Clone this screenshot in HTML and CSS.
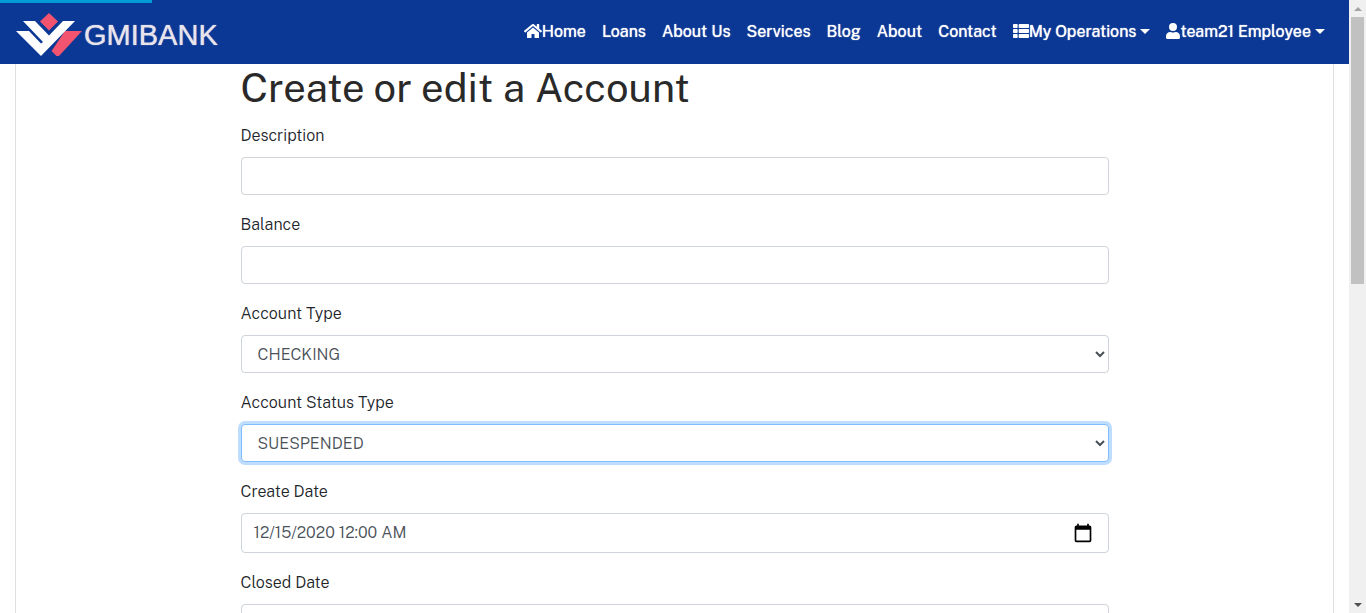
FILE: index.html
```html
<!DOCTYPE html>
<html lang="en">
<head>
<meta charset="utf-8">
<title>Create or edit a Account</title>
<link rel="stylesheet" href="styles.css">
</head>
<body>
<div class="page">
  <header class="navbar">
    <div class="progress"></div>
    <a class="brand" href="#">
      <svg class="brand-mark" viewBox="0 0 66 44" aria-hidden="true">
        <path fill="#f2546f" d="M33 0l9 8.500-9 9-9-9zM49 18h17L43 43h-2.500l-5-5z"/>
        <path fill="#fff" d="M7 8h12l14 14.500L47 8h12L25 43 0 18h13l12 12.500 2-1.500z"/>
      </svg>
      <span class="brand-name">GMIBANK</span>
    </a>
    <nav class="menu">
      <a class="menu-link" href="#"><svg class="icon icon-wide" viewBox="0 0 576 512" aria-hidden="true"><path d="M280.400 148.300L96 300.100V464a16 16 0 0 0 16 16l112-.300a16 16 0 0 0 16-16V368a16 16 0 0 1 16-16h64a16 16 0 0 1 16 16v95.600a16 16 0 0 0 16 16.100l112 .300a16 16 0 0 0 16-16V300L295.700 148.300a12.200 12.200 0 0 0-15.300 0zM571.600 251.500L488 182.600V44a12 12 0 0 0-12-12h-56a12 12 0 0 0-12 12v72.600L318.500 43a48 48 0 0 0-61 0L4.300 251.500a12 12 0 0 0-1.600 16.900l25.500 31a12 12 0 0 0 16.900 1.600L280.400 107.200a12.200 12.200 0 0 1 15.300 0L531 301a12 12 0 0 0 16.900-1.600l25.500-31a12 12 0 0 0-1.800-16.900z"/></svg>Home</a>
      <a class="menu-link" href="#">Loans</a>
      <a class="menu-link" href="#">About Us</a>
      <a class="menu-link" href="#">Services</a>
      <a class="menu-link" href="#">Blog</a>
      <a class="menu-link" href="#">About</a>
      <a class="menu-link" href="#">Contact</a>
      <button class="menu-link" type="button"><svg class="icon" viewBox="0 0 512 512" aria-hidden="true"><path d="M24 32h101a24 24 0 0 1 24 24v80a24 24 0 0 1-24 24H24a24 24 0 0 1-24-24V56a24 24 0 0 1 24-24zM24 192h101a24 24 0 0 1 24 24v80a24 24 0 0 1-24 24H24a24 24 0 0 1-24-24v-80a24 24 0 0 1 24-24zM24 352h101a24 24 0 0 1 24 24v80a24 24 0 0 1-24 24H24a24 24 0 0 1-24-24v-80a24 24 0 0 1 24-24zM205 32h283a24 24 0 0 1 24 24v80a24 24 0 0 1-24 24H205a24 24 0 0 1-24-24V56a24 24 0 0 1 24-24zM205 192h283a24 24 0 0 1 24 24v80a24 24 0 0 1-24 24H205a24 24 0 0 1-24-24v-80a24 24 0 0 1 24-24zM205 352h283a24 24 0 0 1 24 24v80a24 24 0 0 1-24 24H205a24 24 0 0 1-24-24v-80a24 24 0 0 1 24-24z"/></svg>My Operations<span class="caret"></span></button>
      <button class="menu-link" type="button"><svg class="icon icon-narrow" viewBox="0 0 448 512" aria-hidden="true"><path d="M224 256a128 128 0 1 0 0-256 128 128 0 0 0 0 256zm89.600 32h-16.700a174 174 0 0 1-145.800 0h-16.700A134.400 134.400 0 0 0 0 422.400V464a48 48 0 0 0 48 48h352a48 48 0 0 0 48-48v-41.600A134.400 134.400 0 0 0 313.600 288z"/></svg>team21 Employee<span class="caret"></span></button>
    </nav>
  </header>
  <main class="card">
    <form class="form">
      <h1 class="title">Create or edit a Account</h1>
      <div class="group">
        <label class="label" for="description">Description</label>
        <input class="control" id="description" type="text">
      </div>
      <div class="group">
        <label class="label" for="balance">Balance</label>
        <input class="control" id="balance" type="text">
      </div>
      <div class="group">
        <label class="label" for="type">Account Type</label>
        <select class="control" id="type"><option>CHECKING</option><option>SAVING</option></select>
      </div>
      <div class="group">
        <label class="label" for="status">Account Status Type</label>
        <select class="control control-active" id="status"><option>SUESPENDED</option><option>ACTIVE</option></select>
      </div>
      <div class="group">
        <label class="label" for="created">Create Date</label>
        <div class="control date">
          <input class="date-input" id="created" type="text" value="12/15/2020 12:00 AM">
          <button class="date-button" type="button" aria-label="Choose create date"><svg class="calendar" viewBox="0 0 24 24" aria-hidden="true"><path d="M20 3h-1V1h-2v2H7V1H5v2H4a2 2 0 0 0-2 2v16a2 2 0 0 0 2 2h16a2 2 0 0 0 2-2V5a2 2 0 0 0-2-2zm0 18H4V8h16z"/></svg></button>
        </div>
      </div>
      <div class="group">
        <label class="label" for="closed">Closed Date</label>
        <div class="control date">
          <input class="date-input" id="closed" type="text" value="12/15/2020 12:00 AM">
          <button class="date-button" type="button" aria-label="Choose closed date"><svg class="calendar" viewBox="0 0 24 24" aria-hidden="true"><path d="M20 3h-1V1h-2v2H7V1H5v2H4a2 2 0 0 0-2 2v16a2 2 0 0 0 2 2h16a2 2 0 0 0 2-2V5a2 2 0 0 0-2-2zm0 18H4V8h16z"/></svg></button>
        </div>
      </div>
    </form>
  </main>
</div>
<div class="scrollbar" aria-hidden="true">
  <span class="arrow arrow-up"></span>
  <div class="track"><div class="thumb"></div></div>
  <span class="arrow arrow-down"></span>
</div>
</body>
</html>
```
FILE: styles.css
```css
* { box-sizing: border-box; }

body {
  margin: 0;
  display: flex;
  height: 100vh;
  overflow: hidden;
  font-family: "Public Sans", Inter, sans-serif;
  font-size: 16px;
  font-weight: 300;
  line-height: 27px;
  color: #212529;
  background: #fff;
}

button, input, select { font: inherit; }

.page {
  flex: 1;
  min-width: 0;
  display: flex;
  flex-direction: column;
  overflow: hidden;
}

.navbar {
  position: relative;
  flex: none;
  display: flex;
  align-items: center;
  justify-content: space-between;
  height: 64px;
  padding: 0 16px;
  background: #0a3894;
}

.progress {
  position: absolute;
  top: 0;
  left: 0;
  width: 152px;
  height: 3px;
  background: #009cd8;
}

.brand {
  display: flex;
  align-items: center;
  gap: 2px;
  padding-top: 5px;
  color: #e8e4ec;
  text-decoration: none;
}

.brand-mark { width: 66px; height: 44px; }

.brand-name {
  font: 29px/36px "Liberation Sans", Arial, sans-serif;
  text-shadow: 0 0 1px #e8e4ec;
}

.menu { display: flex; padding-bottom: 2px; }

.menu-link {
  display: flex;
  align-items: center;
  padding: 0 8px;
  border: 0;
  background: none;
  color: #fff;
  font-size: 16px;
  font-weight: 400;
  text-decoration: none;
  text-shadow: 0 0 1px #fff;
  white-space: nowrap;
}

.icon { width: 16px; height: 16px; fill: currentColor; }
.icon-wide { width: 18px; }
.icon-narrow { width: 14px; }

.caret {
  margin-left: 4px;
  border: 5px solid transparent;
  border-top-color: currentColor;
  border-bottom: 0;
}

.card {
  flex: none;
  display: flex;
  justify-content: center;
  margin: 0 15px;
  border: solid #dfdfdf;
  border-width: 0 1px;
}

.form { width: 868px; max-width: 100%; }

.title {
  margin: 0 0 10px;
  font-size: 40px;
  line-height: 48px;
  font-weight: 400;
  color: #292929;
}

.group { margin-bottom: 16px; }

.label { display: block; margin-bottom: 8px; }

.control {
  display: block;
  width: 100%;
  height: 38px;
  padding: 6px 12px;
  border: 1px solid #ced4da;
  border-radius: 4px;
  background: #fff;
  color: #495057;
  line-height: 24px;
}

.control-active {
  border-color: #80bdff;
  box-shadow: 0 0 0 3px #bfdeff;
  outline: 0;
}

.date {
  display: flex;
  align-items: center;
  height: 40px;
}

.date-input {
  flex: 1;
  min-width: 0;
  padding: 0;
  border: 0;
  outline: 0;
  color: inherit;
  background: none;
  font-kerning: none;
}

.date-button {
  display: flex;
  padding: 0 3px;
  border: 0;
  background: none;
}

.calendar { width: 20px; height: 20px; }

.scrollbar {
  flex: none;
  display: flex;
  flex-direction: column;
  align-items: center;
  justify-content: space-between;
  width: 17px;
  padding: 7px 2px 6px;
  background: #f0f0f0;
}

.track { flex: 1; width: 13px; padding: 6px 0; }
.thumb { height: 46%; background: #c1c1c1; }

.arrow { border: 4px solid transparent; }
.arrow-up { border-top: 0; border-bottom-color: #a3a3a3; }
.arrow-down { border-bottom: 0; border-top-color: #505050; }
```
